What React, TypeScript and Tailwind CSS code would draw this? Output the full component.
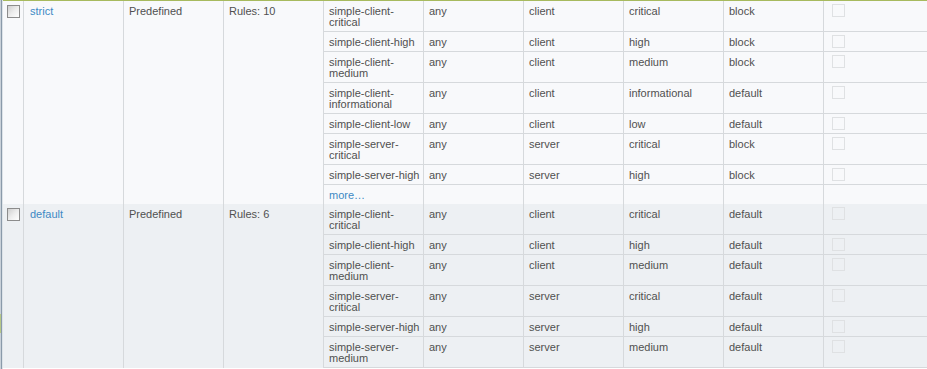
import React from 'react';

type Rule = [string, string, string, string, string];

type Profile = {
  name: string;
  location: string;
  rules: string;
  bg: string;
  items: Rule[];
  more?: boolean;
};

const profiles: Profile[] = [
  {
    name: 'strict',
    location: 'Predefined',
    rules: 'Rules: 10',
    bg: 'bg-[#f8f9fb]',
    more: true,
    items: [
      ['simple-client-critical', 'any', 'client', 'critical', 'block'],
      ['simple-client-high', 'any', 'client', 'high', 'block'],
      ['simple-client-medium', 'any', 'client', 'medium', 'block'],
      ['simple-client-informational', 'any', 'client', 'informational', 'default'],
      ['simple-client-low', 'any', 'client', 'low', 'default'],
      ['simple-server-critical', 'any', 'server', 'critical', 'block'],
      ['simple-server-high', 'any', 'server', 'high', 'block'],
    ],
  },
  {
    name: 'default',
    location: 'Predefined',
    rules: 'Rules: 6',
    bg: 'bg-[#edf0f3]',
    items: [
      ['simple-client-critical', 'any', 'client', 'critical', 'default'],
      ['simple-client-high', 'any', 'client', 'high', 'default'],
      ['simple-client-medium', 'any', 'client', 'medium', 'default'],
      ['simple-server-critical', 'any', 'server', 'critical', 'default'],
      ['simple-server-high', 'any', 'server', 'high', 'default'],
      ['simple-server-medium', 'any', 'server', 'medium', 'default'],
    ],
  },
];

function Checkbox() {
  return (
    <span className="block w-[13px] h-[13px] border border-[#8c8c8c] bg-linear-to-br from-[#cfcfcf] via-[#ededed] to-white" />
  );
}

function RuleRow({ rule }: { rule: Rule }) {
  return (
    <div className="flex border-b border-[#d6d9dc]">
      {rule.map((value, i) => (
        <div
          key={i}
          className="w-[100px] shrink-0 border-l border-[#d6d9dc] pl-[5px] pr-[2px] pt-[5px] pb-[3px] min-h-[19px] break-words"
        >
          {value}
        </div>
      ))}
      <div className="flex-1 border-l border-[#d6d9dc] pl-[8px] pt-[3px]">
        <span className="block w-[13px] h-[13px] border border-[#dfe1e3]" />
      </div>
    </div>
  );
}

function ProfileRow({ profile }: { profile: Profile }) {
  return (
    <div className={`flex ${profile.bg}`}>
      <div className="w-[20px] shrink-0 pl-[4px] pt-[4px]">
        <Checkbox />
      </div>
      <div className="w-[100px] shrink-0 border-l border-[#d6d9dc] pl-[6px] pt-[5px]">
        <a href="#" className="text-[#3d89c4]">
          {profile.name}
        </a>
      </div>
      <div className="w-[100px] shrink-0 border-l border-[#d6d9dc] pl-[5px] pt-[5px]">
        {profile.location}
      </div>
      <div className="w-[100px] shrink-0 border-l border-[#d6d9dc] pl-[5px] pt-[5px]">
        {profile.rules}
      </div>
      <div className="flex-1 flex flex-col">
        {profile.items.map((rule) => (
          <RuleRow key={rule[0]} rule={rule} />
        ))}
        {profile.more && (
          <div className="flex h-[19px]">
            <div className="w-[100px] shrink-0 border-l border-[#d6d9dc] pl-[5px] pt-[5px]">
              <a href="#" className="text-[#3d89c4]">
                more…
              </a>
            </div>
            {[0, 1, 2, 3].map((i) => (
              <div key={i} className="w-[100px] shrink-0 border-l border-[#d6d9dc]" />
            ))}
            <div className="flex-1 border-l border-[#d6d9dc]" />
          </div>
        )}
      </div>
    </div>
  );
}

export default function App() {
  return (
    <div className="w-[927px] h-[369px] overflow-hidden bg-white flex text-[11px] leading-[11px] text-[#505050] font-['Liberation_Sans',Arial,sans-serif]">
      <div className="relative w-[3px] shrink-0 flex">
        <div className="w-px bg-[#c9d1d9]" />
        <div className="w-px bg-[#8a9aaa]" />
        <div className="w-px bg-[#dde3e8]" />
        <div className="absolute left-0 top-[314px] w-px h-[19px] bg-[#b7c887]" />
      </div>
      <div className="flex-1 flex flex-col border-t border-[#a7ba5e]">
        {profiles.map((p) => (
          <ProfileRow key={p.name} profile={p} />
        ))}
      </div>
    </div>
  );
}
